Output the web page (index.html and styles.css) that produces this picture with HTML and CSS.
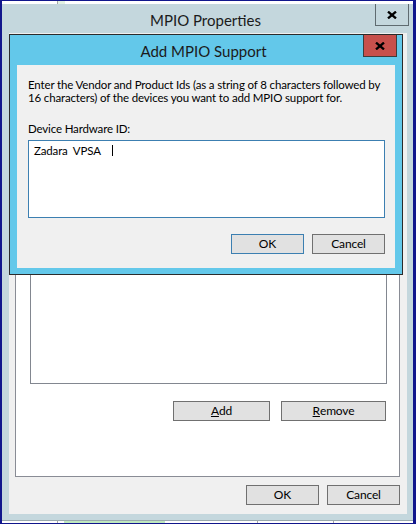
FILE: index.html
```html
<!DOCTYPE html>
<html lang="en">
<head>
<meta charset="utf-8">
<title>MPIO Properties</title>
<link rel="stylesheet" href="styles.css">
</head>
<body>
<div class="screen">
  <div class="strip">
    <span class="gap55"></span><span class="vline"></span><span class="green g7"></span>
  </div>

  <div class="window">
    <div class="titlebar">
      <span class="title">MPIO Properties</span>
      <span class="close close-outer">
        <svg width="10" height="8" viewBox="0 0 10 8"><path d="M1 0.6 L9 7.4 M9 0.6 L1 7.4" stroke="#000" stroke-width="2.3" fill="none"/></svg>
      </span>
    </div>
    <div class="client">
      <div class="tabs"></div>
      <div class="tabpage">
        <div class="listbox"></div>
        <div class="row">
          <button class="btn w97"><u>A</u>dd</button>
          <button class="btn w105"><u>R</u>emove</button>
        </div>
      </div>
      <div class="footer">
        <button class="btn w73">OK</button>
        <button class="btn w73">Cancel</button>
      </div>
    </div>
  </div>

  <div class="strip strip-bottom">
    <span class="gap55"></span><span class="vline"></span><span class="gap6"></span><span class="green g101"></span><span class="gap92"></span><span class="vline"></span><span class="gap75"></span><span class="vline"></span>
  </div>

  <div class="dialog">
    <div class="titlebar dtitlebar">
      <span class="title">Add MPIO Support</span>
      <span class="close close-red">
        <svg width="10" height="8" viewBox="0 0 10 8"><path d="M1 0.6 L9 7.4 M9 0.6 L1 7.4" stroke="#000" stroke-width="2.3" fill="none"/></svg>
      </span>
    </div>
    <div class="dclient">
      <div class="desc">
        <span class="line">Enter the Vendor and Product Ids (as a string of 8 characters followed by</span>
        <span class="line">16 characters) of the devices you want to add MPIO support for.</span>
      </div>
      <div class="label">Device Hardware ID:</div>
      <div class="textbox"><span class="value">Zadara  VPSA</span><span class="caret"></span></div>
      <div class="dbuttons">
        <button class="btn w73 default">OK</button>
        <button class="btn w73">Cancel</button>
      </div>
    </div>
  </div>
</div>
</body>
</html>
```

FILE: styles.css
```css
* { box-sizing: border-box; }
html, body { margin: 0; padding: 0; }
body {
  width: 416px;
  height: 524px;
  overflow: hidden;
  background: #11168c;
  font-family: Lato, "Noto Sans", sans-serif;
  font-size: 11.5px;
  letter-spacing: -0.15px;
  color: #000;
}
.screen {
  position: relative;
  width: 416px;
  height: 524px;
  border-style: solid;
  border-color: #11168c;
  border-width: 1px 3px 1px 2px;
  display: flex;
  flex-direction: column;
}
.strip {
  height: 3px;
  background: #fff;
  display: flex;
  flex: none;
}
.strip-bottom { border-top: 1px solid #9aa9ae; }
.gap55 { width: 55px; }
.gap6 { width: 6px; }
.gap92 { width: 92px; }
.gap75 { width: 75px; }
.vline { width: 1px; background: #a8a8a8; }
.green { background: #bfe8bf; }
.g7 { width: 7px; background: #e3f2e3; }
.g101 { width: 101px; }

.window {
  height: 516px;
  flex: none;
  background: #c4d7dd;
  display: flex;
  flex-direction: column;
}
.titlebar {
  height: 29px;
  flex: none;
  display: grid;
  grid-template-columns: 1fr auto 1fr;
  padding-right: 4px;
}
.title {
  grid-column: 2;
  font-size: 15px;
  letter-spacing: 0;
  line-height: 20px;
  padding-top: 6px;
  color: #1b1b1b;
  white-space: nowrap;
}
.close {
  grid-column: 3;
  justify-self: end;
  align-self: start;
  width: 34px;
  height: 22px;
  display: flex;
  align-items: center;
  justify-content: center;
}
.close-outer {
  border: 1px solid #5f6b70;
  border-top: none;
  background: #c4d7dd;
}
.client {
  flex: 1;
  background: #f0f0f0;
  margin: 0 6px 6px 7px;
  padding: 0 7px 9px 6px;
  display: flex;
  flex-direction: column;
}
.tabs { height: 27px; flex: none; }
.tabpage {
  height: 417px;
  flex: none;
  border: 1px solid #898c95;
  background: #fff;
  padding: 22px 12px 55px 14px;
  display: flex;
  flex-direction: column;
}
.listbox {
  flex: 1;
  border: 1px solid #828790;
  background: #fff;
}
.row {
  margin-top: 17px;
  display: flex;
  justify-content: flex-end;
  gap: 11px;
  padding-right: 1px;
}
.footer {
  margin-top: 8px;
  display: flex;
  justify-content: flex-end;
  gap: 8px;
}
.btn {
  height: 20px;
  border: 1px solid #707070;
  background: #e1e1e1;
  font-family: inherit;
  font-size: 12px;
  letter-spacing: inherit;
  color: #000;
  padding: 0;
  margin: 0;
  display: flex;
  align-items: center;
  justify-content: center;
  line-height: 14px;
}
.btn.default { border-color: #3c7fb1; }
.w73 { width: 73px; }
.w97 { width: 97px; }
.w105 { width: 105px; }

.dialog {
  position: absolute;
  left: 7px;
  top: 33px;
  width: 394px;
  height: 241px;
  border: 1px solid #2b2b2b;
  background: #63c8ea;
  display: flex;
  flex-direction: column;
}
.dtitlebar {
  height: 30px;
  padding-right: 5px;
}
.close-red {
  background: #c7504c;
  border: 1px solid #3d3d3d;
  border-top: none;
}
.dclient {
  flex: 1;
  margin: 0 7px 6px 7px;
  background: #f0f0f0;
  padding: 13px 10px 14px 11px;
  display: flex;
  flex-direction: column;
}
.desc { line-height: 13px; }
.line { display: block; white-space: nowrap; }
.label { margin-top: 18px; line-height: 13px; }
.textbox {
  margin-top: 5px;
  height: 78px;
  border: 1px solid #3c7fb1;
  background: #fff;
  padding: 2px 5px;
  line-height: 13px;
  display: flex;
  align-items: flex-start;
}
.value { white-space: pre; padding-top: 1px; }
.caret {
  width: 1px;
  height: 11px;
  background: #000;
  margin-left: 11px;
  margin-top: 2px;
}
.dbuttons {
  margin-top: 16px;
  display: flex;
  justify-content: flex-end;
  gap: 8px;
}
```
